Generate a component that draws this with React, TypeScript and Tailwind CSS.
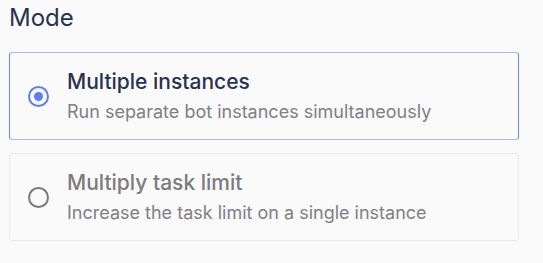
import { useState } from "react";

type Option = {
  id: string;
  title: string;
  description: string;
};

const options: Option[] = [
  {
    id: "instances",
    title: "Multiple instances",
    description: "Run separate bot instances simultaneously",
  },
  {
    id: "tasks",
    title: "Multiply task limit",
    description: "Increase the task limit on a single instance",
  },
];

function Radio({ checked }: { checked: boolean }) {
  if (checked) {
    return (
      <span className="flex h-[21px] w-[21px] shrink-0 items-center justify-center rounded-full border-[2.5px] border-[#5b7ff0]">
        <span className="h-[9px] w-[9px] rounded-full bg-[#5b7ff0]" />
      </span>
    );
  }
  return <span className="h-[21px] w-[21px] shrink-0 rounded-full border-[2.5px] border-[#77777b]" />;
}

export default function App() {
  const [mode, setMode] = useState("instances");

  return (
    <div className="min-h-screen bg-[#fafafa] px-[9px] pt-[2px] font-['Inter',sans-serif]">
      <h2 className="text-[24px] leading-[32px] font-normal text-[#28314f]">Mode</h2>
      <div className="mt-[18px] flex w-[510px] flex-col gap-[13px]">
        {options.map((opt) => {
          const active = mode === opt.id;
          return (
            <button
              key={opt.id}
              onClick={() => setMode(opt.id)}
              className={
                active
                  ? "flex h-[88px] items-center gap-[18px] rounded-[3px] border border-x-[#6687f1] border-y-[#a6b8f6] bg-[#fafafa] pl-[18px] text-left"
                  : "flex h-[88px] items-center gap-[18px] rounded-[3px] border border-[#ebebeb] bg-[#fafafa] pl-[18px] text-left"
              }
            >
              <Radio checked={active} />
              <div className="flex flex-col">
                <span
                  className={
                    active
                      ? "text-[21px] leading-[26px] font-medium text-[#28314f]"
                      : "text-[21px] leading-[26px] font-medium text-[#7b7b80]"
                  }
                >
                  {opt.title}
                </span>
                <span className="mt-[5px] text-[18px] leading-[24px] text-[#7f7f85]">
                  {opt.description}
                </span>
              </div>
            </button>
          );
        })}
      </div>
    </div>
  );
}
